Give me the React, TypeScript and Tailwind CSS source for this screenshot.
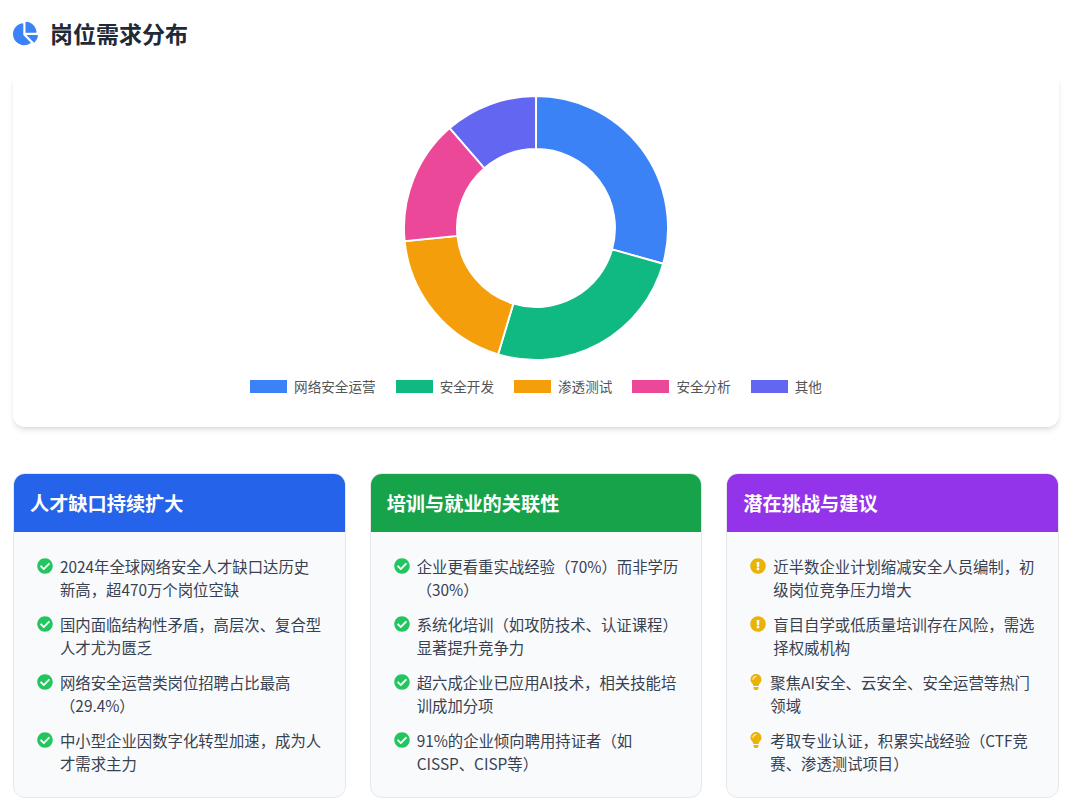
import { FaChartPie, FaCheckCircle, FaExclamationCircle, FaLightbulb } from "react-icons/fa";

const segments = [
  { name: "网络安全运营", color: "#3b82f6", swatch: "bg-[#3b82f6]", from: 0, to: 105.7 },
  { name: "安全开发", color: "#10b981", swatch: "bg-[#10b981]", from: 105.7, to: 196.7 },
  { name: "渗透测试", color: "#f59e0b", swatch: "bg-[#f59e0b]", from: 196.7, to: 264.3 },
  { name: "安全分析", color: "#ec4899", swatch: "bg-[#ec4899]", from: 264.3, to: 319.2 },
  { name: "其他", color: "#6366f1", swatch: "bg-[#6366f1]", from: 319.2, to: 360 },
];

const columns = [
  {
    title: "人才缺口持续扩大",
    head: "bg-[#2563eb]",
    items: [
      { kind: "check", text: "2024年全球网络安全人才缺口达历史新高，超470万个岗位空缺" },
      { kind: "check", text: "国内面临结构性矛盾，高层次、复合型人才尤为匮乏" },
      { kind: "check", text: "网络安全运营类岗位招聘占比最高（29.4%）" },
      { kind: "check", text: "中小型企业因数字化转型加速，成为人才需求主力" },
    ],
  },
  {
    title: "培训与就业的关联性",
    head: "bg-[#16a34a]",
    items: [
      { kind: "check", text: "企业更看重实战经验（70%）而非学历（30%）" },
      { kind: "check", text: "系统化培训（如攻防技术、认证课程）显著提升竞争力" },
      { kind: "check", text: "超六成企业已应用AI技术，相关技能培训成加分项" },
      { kind: "check", text: "91%的企业倾向聘用持证者（如CISSP、CISP等）" },
    ],
  },
  {
    title: "潜在挑战与建议",
    head: "bg-[#9333ea]",
    items: [
      { kind: "warn", text: "近半数企业计划缩减安全人员编制，初级岗位竞争压力增大" },
      { kind: "warn", text: "盲目自学或低质量培训存在风险，需选择权威机构" },
      { kind: "tip", text: "聚焦AI安全、云安全、安全运营等热门领域" },
      { kind: "tip", text: "考取专业认证，积累实战经验（CTF竞赛、渗透测试项目）" },
    ],
  },
];

function arc(from: number, to: number) {
  const cx = 133;
  const cy = 133;
  const R = 132;
  const r = 79;
  const pt = (rad: number, deg: number) => {
    const a = (deg * Math.PI) / 180;
    return `${(cx + rad * Math.sin(a)).toFixed(2)} ${(cy - rad * Math.cos(a)).toFixed(2)}`;
  };
  const large = to - from > 180 ? 1 : 0;
  return `M${pt(R, from)} A${R} ${R} 0 ${large} 1 ${pt(R, to)} L${pt(r, to)} A${r} ${r} 0 ${large} 0 ${pt(r, from)} Z`;
}

function ItemIcon({ kind }: { kind: string }) {
  if (kind === "check") return <FaCheckCircle className="mt-[3px] mr-[7px] h-[16px] w-[16px] shrink-0 text-[#22c55e]" />;
  if (kind === "warn") return <FaExclamationCircle className="mt-[3px] mr-[7px] h-[16px] w-[16px] shrink-0 text-[#eab308]" />;
  return <FaLightbulb className="mt-[3px] mr-[8px] h-[16px] w-[12px] shrink-0 text-[#eab308]" />;
}

export default function App() {
  return (
    <div className="h-[809px] w-[1080px] overflow-hidden bg-white pt-[16px] pr-[21px] pl-[13px] font-['Noto_Sans_CJK_SC','Noto_Sans',sans-serif]">
      <div className="flex h-[34px] items-center">
        <FaChartPie className="mr-[12px] text-[25px] text-[#3b82f6]" />
        <h2 className="text-[23px] leading-[34px] font-bold text-[#1f2937]">岗位需求分布</h2>
      </div>

      <div className="mt-[22px] h-[355px] rounded-xl bg-white pt-[23px] shadow-md">
        <svg className="mx-auto block" width="266" height="266" viewBox="0 0 266 266">
          {segments.map((s) => (
            <path key={s.name} d={arc(s.from, s.to)} fill={s.color} stroke="#fff" strokeWidth="1.9" />
          ))}
        </svg>
        <div className="mt-[15px] flex items-center justify-center gap-[20px] text-[13.6px] leading-[20px] text-[#555]">
          {segments.map((s) => (
            <div key={s.name} className="flex items-center gap-[7px]">
              <span className={`h-[13px] w-[37px] ${s.swatch}`} />
              <span>{s.name}</span>
            </div>
          ))}
        </div>
      </div>

      <div className="mt-[46px] grid grid-cols-3 gap-[24px]">
        {columns.map((col) => (
          <div key={col.title} className="h-[325px] overflow-hidden rounded-xl border border-[#e5e7eb] bg-[#f9fafc]">
            <div className={`flex h-[58px] items-center px-[16px] text-[19.2px] font-bold text-white ${col.head}`}>
              {col.title}
            </div>
            <ul className="flex flex-col gap-[12px] pt-[23px] pr-[21px] pl-[23px] text-[15.36px] leading-[23px] text-[#374151]">
              {col.items.map((item) => (
                <li key={item.text} className="flex">
                  <ItemIcon kind={item.kind} />
                  <span>{item.text}</span>
                </li>
              ))}
            </ul>
          </div>
        ))}
      </div>
    </div>
  );
}
